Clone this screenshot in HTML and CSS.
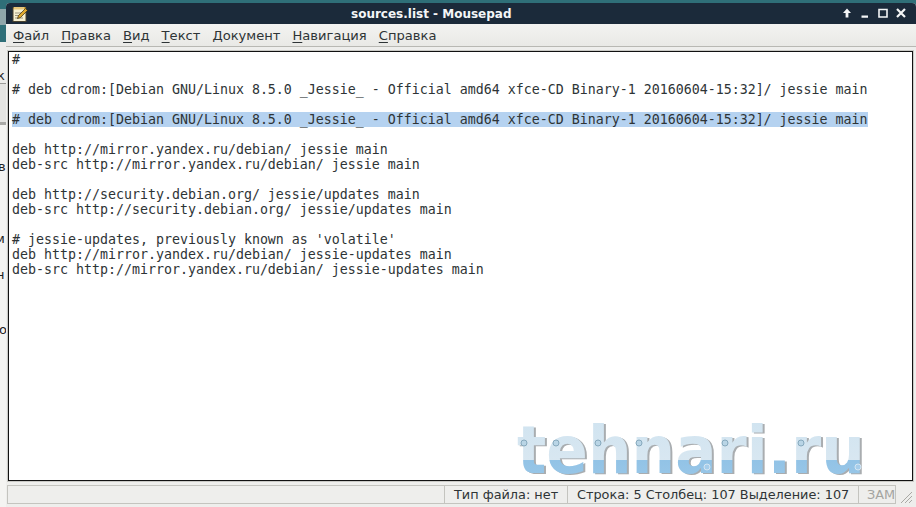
FILE: index.html
```html
<!DOCTYPE html>
<html lang="ru">
<head>
<meta charset="utf-8">
<title>sources.list - Mousepad</title>
<link rel="stylesheet" href="styles.css">
</head>
<body>
<div class="desktop">
  <div class="behind">
    <span class="frag f1">к</span>
    <span class="frag f2">в</span>
    <span class="frag f3">м</span>
    <span class="frag f4">н</span>
    <span class="frag f5">о</span>
  </div>
  <div class="window">
    <header class="titlebar">
      <svg class="appicon" viewBox="0 0 16 16" width="16" height="16" aria-hidden="true">
        <rect x="1" y="2" width="13" height="13.500" fill="#f7f1d2" stroke="#4a4330" stroke-width="1"/>
        <path d="M1.500 1h12v2.500h-12z" fill="#d8a63c"/>
        <path d="M3 1v3M5 1v3M7 1v3M9 1v3M11 1v3" stroke="#fff7d8" stroke-width=".8"/>
        <path d="M3 7h7M3 9.500h5M3 12h8" stroke="#9a9580" stroke-width="1"/>
        <path d="M5.500 12.500l1-3L13.500 2.500l2 2-7 7z" fill="#e0a92f" stroke="#33290f" stroke-width=".7"/>
      </svg>
      <div class="title">sources.list - Mousepad</div>
      <div class="controls">
        <svg viewBox="0 0 12 12" width="12" height="12" aria-hidden="true"><path d="M6 1.500 10 6H7.400v4.500H4.600V6H2z" fill="#f4f6f7"/></svg>
        <svg viewBox="0 0 12 12" width="12" height="12" aria-hidden="true"><path d="M2.500 8.500h6.500v2.300H2.500z" fill="#f4f6f7"/></svg>
        <svg viewBox="0 0 12 12" width="12" height="12" aria-hidden="true"><path d="M2 2.500h8v7.500H2z" fill="none" stroke="#f4f6f7" stroke-width="1.600"/></svg>
        <svg viewBox="0 0 12 12" width="12" height="12" aria-hidden="true"><path d="M2 2l8 8M10 2l-8 8" fill="none" stroke="#f4f6f7" stroke-width="2.200"/></svg>
      </div>
    </header>
    <nav class="menubar">
      <span class="menu"><u>Ф</u>айл</span>
      <span class="menu"><u>П</u>равка</span>
      <span class="menu"><u>В</u>ид</span>
      <span class="menu"><u>Т</u>екст</span>
      <span class="menu"><u>Д</u>окумент</span>
      <span class="menu"><u>Н</u>авигация</span>
      <span class="menu"><u>С</u>правка</span>
    </nav>
    <main class="editor">
      <pre class="code"><span class="line">#</span>
<span class="line"> </span>
<span class="line"># deb cdrom:[Debian GNU/Linux 8.5.0 _Jessie_ - Official amd64 xfce-CD Binary-1 20160604-15:32]/ jessie main</span>
<span class="line"> </span>
<span class="line"><span class="sel"># deb cdrom:[Debian GNU/Linux 8.5.0 _Jessie_ - Official amd64 xfce-CD Binary-1 20160604-15:32]/ jessie main</span></span>
<span class="line"> </span>
<span class="line">deb http://mirror.yandex.ru/debian/ jessie main</span>
<span class="line">deb-src http://mirror.yandex.ru/debian/ jessie main</span>
<span class="line"> </span>
<span class="line">deb http://security.debian.org/ jessie/updates main</span>
<span class="line">deb-src http://security.debian.org/ jessie/updates main</span>
<span class="line"> </span>
<span class="line"># jessie-updates, previously known as 'volatile'</span>
<span class="line">deb http://mirror.yandex.ru/debian/ jessie-updates main</span>
<span class="line">deb-src http://mirror.yandex.ru/debian/ jessie-updates main</span></pre>
      <svg class="logo" viewBox="0 0 356 62" width="356" height="62" aria-label="tehnari.ru">
        <defs>
          <linearGradient id="wm" x1="0" y1="0" x2="0" y2="1">
            <stop offset="0" stop-color="#cfe3f0"/>
            <stop offset=".62" stop-color="#d8e7f1"/>
            <stop offset=".62" stop-color="#92c3e6"/>
            <stop offset="1" stop-color="#9cc8e8"/>
          </linearGradient>
        </defs>
        <text class="logo-shadow" x="4" y="56" textLength="348" lengthAdjust="spacingAndGlyphs">tehnari.ru</text>
        <text class="logo-face" x="2" y="55" fill="url(#wm)" textLength="348" lengthAdjust="spacingAndGlyphs">tehnari.ru</text>
        <g class="bolts">
          <circle cx="9" cy="25" r="3"/><circle cx="41" cy="25" r="3"/><circle cx="83" cy="25" r="3"/><circle cx="124" cy="25" r="3"/>
          <circle cx="210" cy="25" r="3"/><circle cx="286" cy="25" r="3"/>
        </g>
        <g class="bolts light">
          <circle cx="192" cy="49" r="3"/><circle cx="343" cy="49" r="3"/>
        </g>
      </svg>
    </main>
    <footer class="statusbar">
      <div class="cell grow"></div>
      <div class="cell type">Тип файла: нет</div>
      <div class="cell pos">Строка: 5 Столбец: 107 Выделение: 107</div>
      <div class="cell ovr">ЗАМ</div>
      <svg class="grip" viewBox="0 0 14 14" width="14" height="14" aria-hidden="true"><path d="M13 2 2 13M13 6 6 13M13 10l-3 3" stroke="#a9a9a4" stroke-width="1" fill="none"/></svg>
    </footer>
  </div>
</div>
</body>
</html>
```
FILE: styles.css
```css
* { box-sizing: border-box; }
html, body { margin: 0; padding: 0; }
body { width: 916px; height: 507px; overflow: hidden; font-family: "DejaVu Sans", sans-serif; }
.desktop { position: relative; width: 916px; height: 507px; background: #f1f1ef; padding: 3px 0 0 6px; }
.desktop::before { content: ""; position: absolute; left: 0; top: 0; width: 916px; height: 42px; background: linear-gradient(#2f6f78 0, #2f6f78 9px, #8fa6aa 9px, #8fa6aa 25px, #2f6f78 25px); }
.behind { position: absolute; left: 0; top: 42px; width: 6px; height: 465px; overflow: hidden; font-size: 13px; color: #222; background: linear-gradient(#ededeb 0, #ededeb 41px, #9b9b98 41px, #9b9b98 42px, #e4e4e2 42px, #e4e4e2 80px, #a9a9a6 80px, #a9a9a6 83px, #f4f4f2 83px); }
.frag { position: absolute; left: -3px; }
.f1 { top: 26px; } .f2 { top: 117px; left: -2px; } .f3 { top: 189px; left: -5px; } .f4 { top: 225px; left: -4px; } .f5 { top: 280px; left: -1px; }
.window { position: relative; width: 910px; height: 504px; display: flex; flex-direction: column; background: #eeeeec; border-radius: 4px 4px 0 0; overflow: hidden; }
.titlebar { height: 21px; flex: none; display: flex; align-items: center; background: #1b2a3a; color: #f4f6f7; position: relative; }
.appicon { margin-left: 6px; flex: none; }
.title { margin-left: 323px; font-size: 12px; font-weight: 700; white-space: nowrap; }
.controls { position: absolute; right: 9px; top: 4px; display: flex; gap: 6px; }
.menubar { height: 23px; flex: none; display: flex; align-items: center; gap: 12px; padding: 0 0 0 7px; font-size: 13.1px; color: #2e3436; background: linear-gradient(#f3f3f1, #e9e9e6); border-bottom: 1px solid #b8b8b3; }
.menu u { text-underline-offset: 2px; }
.editor { position: relative; flex: 1; min-height: 0; margin: 4px 3px 4px 2px; background: #fff; border: 1px solid #111; box-shadow: 0 0 0 1px #c9c9c5; overflow: hidden; }
.code { margin: 0; padding: 0 0 0 3px; font-family: "DejaVu Sans Mono", monospace; font-size: 13.29px; line-height: 15px; color: #2e3436; }
.sel { background: #b5d2f0; }
.logo { position: absolute; right: 41px; bottom: 0; }
.logo text { font-family: "DejaVu Sans", sans-serif; font-weight: 700; font-size: 66px; }
.logo-shadow { fill: #a9adb0; }
.bolts circle { fill: #b9d5e6; stroke: #86a9bd; stroke-width: 1; }
.bolts.light circle { fill: #a6cdea; stroke: #d5e6f2; }
.statusbar { height: 19px; flex: none; margin: 0 0 3px 0; padding: 0 3px 0 1px; display: flex; align-items: center; font-size: 12.85px; color: #2e3436; background: #eeeeec; }
.cell { height: 19px; display: flex; align-items: center; border: 1px solid #c4c4bf; border-right: 0; padding: 0 0 0 9px; white-space: nowrap; }
.grow { flex: 1; }
.type { width: 123px; }
.pos { width: 291px; }
.ovr { width: 38px; color: #a4a4a0; border-right: 1px solid #c4c4bf; padding: 0 0 0 8px; }
.grip { flex: none; margin-left: 3px; align-self: flex-end; }
```
